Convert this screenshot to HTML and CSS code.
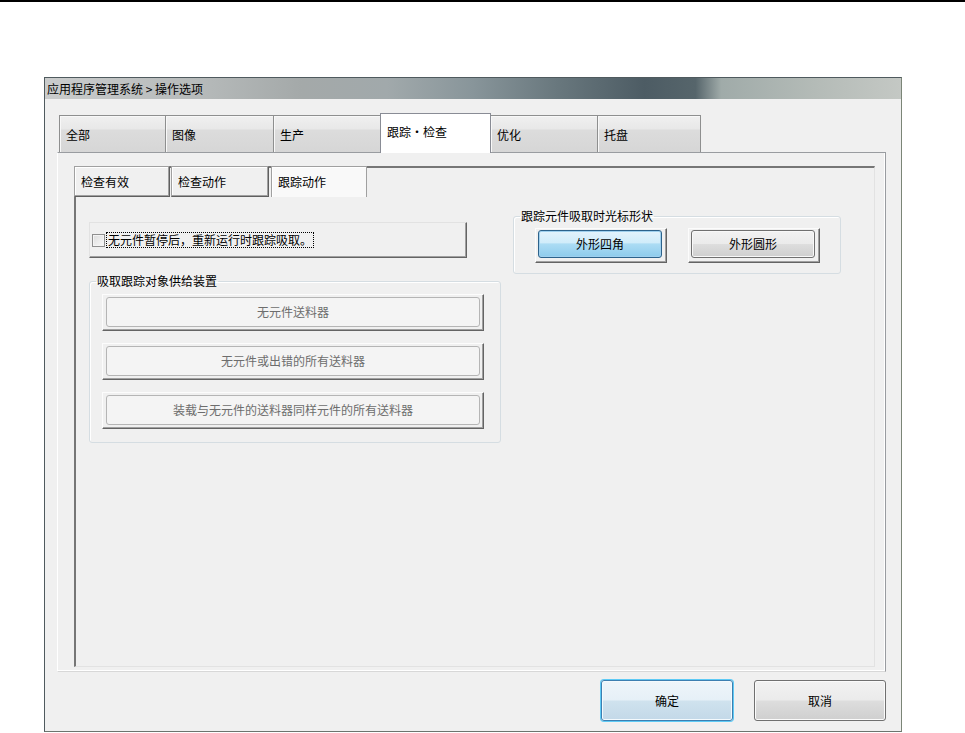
FILE: index.html
```html
<!DOCTYPE html>
<html>
<head>
    <title>操作选项</title>
    <link rel="stylesheet" href="styles.css">
</head>
<body>
    <div class="topline"></div>

    <div class="window">
        <!-- Title bar -->
        <div class="titlebar">应用程序管理系统 &gt; 操作选项</div>

        <div class="client">
            <!-- Main tabs -->
            <div class="tabs">
                <div class="tab">全部</div>
                <div class="tab">图像</div>
                <div class="tab">生产</div>
                <div class="tab active">跟踪・检查</div>
                <div class="tab">优化</div>
                <div class="tab">托盘</div>
            </div>

            <div class="panel">
                <div class="subpanel">
                    <!-- Sub tabs -->
                    <div class="subtabs">
                        <div class="subtab">检查有效</div>
                        <div class="subtab">检查动作</div>
                        <div class="subtab active">跟踪动作</div>
                    </div>

                    <div class="subbody">
                        <div class="col-left">
                            <div class="checkframe">
                                <span class="checkbox"></span>
                                <span class="checklabel">无元件暂停后，重新运行时跟踪吸取。</span>
                            </div>

                            <fieldset class="group group-left">
                                <legend>吸取跟踪对象供给装置</legend>
                                <div class="btnframe"><div class="btn disabled">无元件送料器</div></div>
                                <div class="btnframe"><div class="btn disabled">无元件或出错的所有送料器</div></div>
                                <div class="btnframe"><div class="btn disabled">装载与无元件的送料器同样元件的所有送料器</div></div>
                            </fieldset>
                        </div>

                        <div class="col-right">
                            <fieldset class="group group-right">
                                <legend>跟踪元件吸取时光标形状</legend>
                                <div class="btnframe small"><div class="btn blue">外形四角</div></div>
                                <div class="btnframe small"><div class="btn normal">外形圆形</div></div>
                            </fieldset>
                        </div>
                    </div>
                </div>
            </div>

            <!-- Dialog buttons -->
            <div class="footer">
                <button class="dlgbtn ok">确定</button>
                <button class="dlgbtn">取消</button>
            </div>
        </div>
    </div>
</body>
</html>
```

FILE: styles.css
```css
* {
    box-sizing: border-box;
}

body {
    margin: 0;
    background: #fff;
    color: #000;
    font-family: "Noto Sans CJK SC", "Liberation Sans", sans-serif;
    font-size: 12px;
    line-height: 14px;
}

.topline {
    height: 2px;
    background: #000;
}

/* Dialog window */
.window {
    margin: 75px 0 0 44px;
    width: 858px;
    height: 655px;
    border: 1px solid #4f5a5e;
    border-right-color: #7b8577;
    border-bottom-color: #6c746e;
    background: #f0f0f0;
    display: flex;
    flex-direction: column;
}

.titlebar {
    flex: none;
    height: 21px;
    padding-left: 2px;
    display: flex;
    align-items: center;
    background: linear-gradient(to right, #cacccc 0%, #b6baba 18%, #a4a9a9 30%, #a1a9ab 40%, #88959a 50%, #68777d 60%, #4d5c64 70%, #56656b 76%, #a0aba9 79%, #b4bbb7 90%, #c4c8c4 100%);
}

.client {
    flex: 1;
    padding: 14px 15px 0 12px;
}

/* Main tabs */
.tabs {
    display: flex;
    align-items: flex-end;
    height: 39px;
    margin-left: 2px;
}

.tab {
    height: 37px;
    margin-right: -1px;
    padding: 12px 0 0 6px;
    border: 1px solid #8e8f8f;
    border-bottom: none;
    background: linear-gradient(#f0f0f0, #e8e8e8 35%, #dcdcdc 40%, #d6d6d6);
    box-shadow: inset 1px 1px #f8f8f8;
}

.tab:nth-child(1) { width: 107px; }
.tab:nth-child(2) { width: 109px; }
.tab:nth-child(3) { width: 108px; }
.tab:nth-child(4) { width: 111px; }
.tab:nth-child(5) { width: 108px; }
.tab:nth-child(6) { width: 104px; }

.tab.active {
    position: relative;
    z-index: 1;
    height: 40px;
    margin-bottom: -1px;
    padding-top: 11px;
    background: #fff;
    border-color: #898c95;
    box-shadow: none;
}

.panel {
    height: 520px;
    padding: 13px 10px 4px 16px;
    border: 1px solid #999ca0;
    border-left-color: #fff;
    border-bottom-color: #d8d8d8;
    background: #f0f0f0;
    box-shadow: inset -1px -1px #fff;
}

/* Inner tab page */
.subpanel {
    height: 501px;
    border-top: 2px solid #767676;
    border-left: 2px solid #767676;
    border-right: 1px solid #e2e2e2;
    border-bottom: 1px solid #e2e2e2;
}

.subtabs {
    display: flex;
    height: 31px;
    margin: -2px 0 0 -2px;
}

.subtab {
    height: 31px;
    padding: 8px 0 0 6px;
    border: 1px solid #a0a0a0;
    border-right-color: #5f5f5f;
    border-bottom-color: #5f5f5f;
    background: #f0f0f0;
    box-shadow: inset -1px -1px #a0a0a0, inset 1px 1px #fff;
}

.subtab:nth-child(1) { width: 96px; margin-right: 1px; }
.subtab:nth-child(2) { width: 98px; margin-right: 2px; }
.subtab:nth-child(3) { width: 96px; }

.subtab.active {
    background: #f9f9f9;
    border-color: #a0a0a0;
    border-bottom: none;
    box-shadow: inset 1px 1px #fff;
}

.subbody {
    display: flex;
    align-items: flex-start;
    gap: 12px;
    padding-left: 13px;
}

.col-left {
    width: 412px;
    padding-top: 25px;
}

.col-right {
    width: 328px;
    padding-top: 12px;
}

/* Checkbox button */
.checkframe {
    width: 378px;
    height: 36px;
    display: flex;
    align-items: center;
    gap: 1px;
    padding-left: 2px;
    border-top: 1px solid #e2e2e2;
    border-left: 1px solid #e2e2e2;
    border-right: 1px solid #646464;
    border-bottom: 1px solid #646464;
    box-shadow: inset -1px -1px #a0a0a0;
}

.checkbox {
    width: 13px;
    height: 13px;
    border: 1px solid #8f8f8f;
    background: linear-gradient(135deg, #dcdcdc, #fafafa);
    box-shadow: inset 0 0 0 1px #f4f4f4;
}

.checklabel {
    padding: 0 1px;
    border: 1px dotted #000;
}

/* Group boxes */
.group {
    margin: 0;
    min-width: 0;
    border: 1px solid #d5dde2;
    border-radius: 3px;
    box-shadow: inset 1px 1px #fff;
}

.group legend {
    padding: 0 1px;
    line-height: 14px;
}

.group-left {
    margin-top: 16px;
    padding: 6px 16px 13px 12px;
    display: flex;
    flex-direction: column;
    gap: 12px;
}

.group-left legend {
    margin-left: -6px;
}

.group-right {
    padding: 5px 10px 10px 21px;
    display: flex;
    gap: 21px;
}

.group-right legend {
    margin-left: -15px;
}

/* Raised frame round each button */
.btnframe {
    height: 37px;
    padding: 2px 3px 3px 3px;
    border-top: 1px solid #fcfcfc;
    border-left: 1px solid #fcfcfc;
    border-right: 1px solid #646464;
    border-bottom: 1px solid #646464;
    box-shadow: inset -1px -1px #a0a0a0;
}

.btnframe.small {
    width: 132px;
    height: 35px;
    padding: 1px 4px 4px 2px;
}

.btn {
    height: 100%;
    display: flex;
    align-items: center;
    justify-content: center;
    border: 1px solid #b5b5b5;
    border-radius: 3px;
}

.btn.disabled {
    background: #f4f4f4;
    color: #6d6d6d;
}

.btn.blue {
    border-color: #2c628b;
    background: linear-gradient(#e3f3fc, #d0ecfa 45%, #acdcf4 50%, #8dcbec);
    box-shadow: inset 0 0 0 1px #9fd0ee;
}

.btn.normal {
    border-color: #707070;
    background: linear-gradient(#f2f2f2, #ebebeb 48%, #dddddd 52%, #cfcfcf);
    box-shadow: inset 0 0 0 1px #f8f8f8;
}

/* Dialog buttons */
.footer {
    display: flex;
    justify-content: flex-end;
    gap: 21px;
    margin-top: 8px;
}

.dlgbtn {
    width: 132px;
    height: 41px;
    padding: 0;
    font: inherit;
    color: #000;
    border: 1px solid #707070;
    border-radius: 3px;
    background: linear-gradient(#f2f2f2, #ebebeb 48%, #dddddd 52%, #cfcfcf);
    box-shadow: inset 0 0 0 1px #fbfbfb;
}

.dlgbtn.ok {
    border-color: #3c7fb1;
    background: linear-gradient(#eef5fa, #e6f0f7 48%, #cfe2ee 52%, #c3d9e8);
    box-shadow: 0 0 0 1px #5ecaf5, inset 0 0 0 1px #f4fafd;
}
```
